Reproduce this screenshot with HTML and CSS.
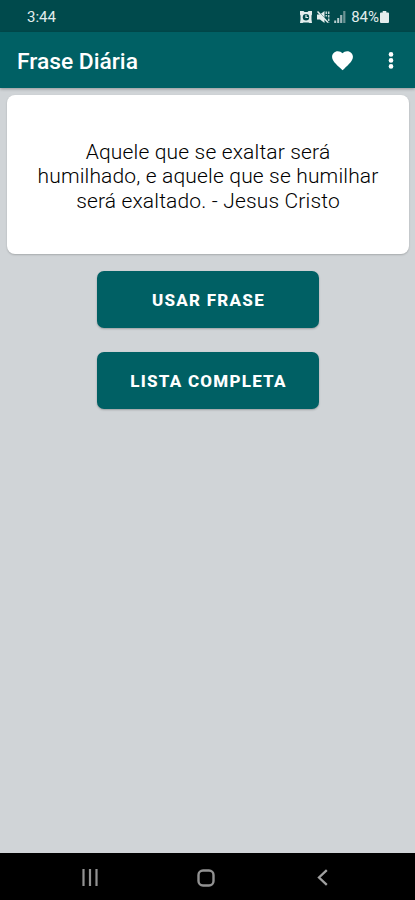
FILE: index.html
```html
<!DOCTYPE html>
<html lang="pt-BR">
<head>
    <meta charset="UTF-8">
    <meta name="viewport" content="width=device-width, initial-scale=1.0">
    <title>Frase Diária</title>
    <link rel="stylesheet" href="styles.css">
</head>
<body>
    <div class="status-bar">
        <span class="time">3:44</span>
        <div class="status-icons">
            <svg class="alarm" width="12" height="12" viewBox="0 0 12 12">
                <path d="M0 0h3.500l1 1h3l1-1H12v3.500l-.5 1v4l.5 3.500H9.500l-1-.5h-5l-1 .5H0l.5-3.500v-4L0 3.500z" fill="#e3eded"/>
                <circle cx="6" cy="6.200" r="3.200" fill="#004a4c"/>
                <path d="M6 3.800v2.700h2.200" fill="none" stroke="#e3eded" stroke-width="1.200"/>
            </svg>
            <svg class="mute" width="13" height="12" viewBox="0 0 13 12">
                <path d="M0 3.500h3L7.500 0v12L3 8.500H0z" fill="#e3eded"/>
                <path d="M1.500 .3l10 11" stroke="#004a4c" stroke-width=".8"/>
                <path d="M.5 .5l10.500 11" stroke="#e3eded" stroke-width="1.500"/>
                <path d="M9.300 .5v5M11.700 .5v11" fill="none" stroke="#c3d4d4" stroke-width="1.500" stroke-dasharray="2.500 1"/>
            </svg>
            <svg class="signal" width="12" height="12" viewBox="0 0 12 12">
                <path d="M1.200 9.500V12M4.200 7v5" stroke="#b9cecf" stroke-width="2"/>
                <path d="M7.200 4v8" stroke="#9ab5b7" stroke-width="2.200"/>
                <path d="M10.300 0v12" stroke="#6b9394" stroke-width="2.200"/>
            </svg>
            <span class="percent">84%</span>
            <svg class="battery" width="9" height="12" viewBox="0 0 9 12">
                <path d="M2.700 0h3.600v1.500H8a1 1 0 0 1 1 1V11a1 1 0 0 1-1 1H1a1 1 0 0 1-1-1V2.500a1 1 0 0 1 1-1h1.700z" fill="#e3eded"/>
            </svg>
        </div>
    </div>

    <div class="header">
        <h1 class="title">Frase Diária</h1>
        <button class="icon-btn heart" aria-label="Favoritos">
            <svg width="25" height="25" viewBox="0 0 24 24">
                <path fill="#fff" d="M12 21.350l-1.450-1.320C5.400 15.360 2 12.280 2 8.500 2 5.420 4.420 3 7.500 3c1.740 0 3.410.81 4.500 2.090C13.090 3.810 14.760 3 16.500 3 19.580 3 22 5.420 22 8.500c0 3.780-3.400 6.860-8.550 11.540L12 21.350z"/>
            </svg>
        </button>
        <button class="icon-btn menu" aria-label="Menu">
            <svg width="6" height="20" viewBox="0 0 6 20">
                <circle cx="3" cy="4.400" r="2.300" fill="#fff"/>
                <circle cx="3" cy="10.400" r="2.300" fill="#fff"/>
                <circle cx="3" cy="16.400" r="2.300" fill="#fff"/>
            </svg>
        </button>
    </div>

    <div class="container">
        <div class="card">
            <p class="quote">Aquele que se exaltar será<br>humilhado, e aquele que se humilhar<br>será exaltado. - Jesus Cristo</p>
        </div>
        <button class="btn">USAR FRASE</button>
        <button class="btn">LISTA COMPLETA</button>
    </div>

    <div class="nav-bar">
        <svg class="recents" width="16" height="17" viewBox="0 0 16 17">
            <path d="M1.500 0v17M8 0v17M14.500 0v17" stroke="#929292" stroke-width="2.200"/>
        </svg>
        <svg class="home" width="18" height="18" viewBox="0 0 18 18">
            <rect x="1.500" y="1.500" width="15" height="15" rx="4.500" fill="none" stroke="#929292" stroke-width="2.400"/>
        </svg>
        <svg class="back" width="11" height="17" viewBox="0 0 11 17">
            <path d="M9.800 1.200L2 8.500l7.800 7.300" fill="none" stroke="#a0a0a0" stroke-width="2.300"/>
        </svg>
    </div>
</body>
</html>
```

FILE: styles.css
```css
body {
    font-family: Roboto, sans-serif;
    margin: 0;
    height: 900px;
    display: flex;
    flex-direction: column;
    background: #d0d4d7;
    overflow: hidden;
}
.status-bar {
    height: 32px;
    display: flex;
    align-items: center;
    justify-content: space-between;
    padding: 2px 26px 0 27px;
    box-sizing: border-box;
    background: #004a4c;
    color: #e3eded;
    font-size: 15px;
}
.status-icons {
    display: flex;
    align-items: center;
}
.mute {
    margin-left: 5px;
}
.signal {
    margin-left: 4px;
}
.percent {
    margin-left: 5px;
    margin-right: 1px;
    font-size: 15px;
}
.header {
    height: 56px;
    display: flex;
    align-items: center;
    padding: 0 21px 0 17px;
    background: #006064;
    box-shadow: 0 1px 3px rgba(0, 0, 0, 0.3);
}
.title {
    flex: 1;
    margin: 0;
    padding-top: 2px;
    font-size: 22.8px;
    font-weight: 500;
    color: #fff;
}
.icon-btn {
    display: flex;
    border: none;
    padding: 0;
    background: transparent;
    cursor: pointer;
}
.heart {
    margin-right: 33.5px;
}
.container {
    flex: 1;
    display: flex;
    flex-direction: column;
    align-items: center;
    padding-top: 7px;
}
.card {
    width: 402px;
    height: 159px;
    display: flex;
    align-items: center;
    justify-content: center;
    margin-bottom: 16.5px;
    border-radius: 8px;
    background: #fff;
    box-shadow: 0 1px 2px rgba(0, 0, 0, 0.2);
}
.quote {
    margin: 0;
    padding-top: 4px;
    padding-left: 1px;
    font-size: 21px;
    font-weight: 300;
    line-height: 24.5px;
    letter-spacing: 0.16px;
    text-align: center;
    white-space: nowrap;
    color: #000;
}
.btn {
    width: 222px;
    height: 57px;
    margin-bottom: 24px;
    padding: 2px 0 0 2px;
    border: none;
    border-radius: 7px;
    background: #006064;
    box-shadow: 0 1px 2px rgba(0, 0, 0, 0.25);
    color: #fff;
    font-family: Roboto, sans-serif;
    font-size: 17px;
    font-weight: 800;
    letter-spacing: 1.25px;
    cursor: pointer;
}
.nav-bar {
    height: 47px;
    display: flex;
    align-items: center;
    padding: 2px 0 0 82px;
    box-sizing: border-box;
    background: #000;
}
.home {
    margin-left: 99px;
}
.back {
    margin-left: 102px;
}
```
